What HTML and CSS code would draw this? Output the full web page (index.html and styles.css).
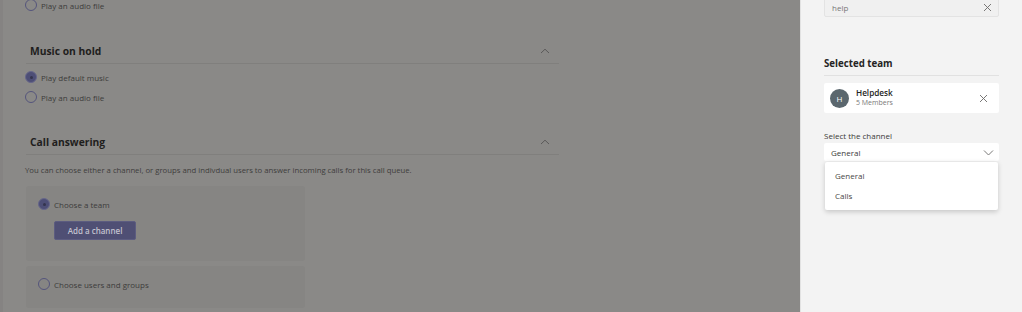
FILE: index.html
```html
<!DOCTYPE html>
<html lang="en">
<head>
<meta charset="utf-8">
<title>Call queue - Call answering</title>
<link rel="stylesheet" href="styles.css">
</head>
<body>
<div class="app">
  <main class="page">
    <div class="rail"></div>
    <div class="content">
      <div class="radio-row first"><span class="radio"></span><span>Play an audio file</span></div>

      <section class="section">
        <div class="section-head">
          <h2>Music on hold</h2>
          <svg class="chev" width="10" height="6" viewBox="0 0 10 6"><path d="M1 5 L5 1.2 L9 5" fill="none" stroke="#555453" stroke-width="0.9"/></svg>
        </div>
        <div class="radio-row"><span class="radio checked"></span><span>Play default music</span></div>
        <div class="radio-row"><span class="radio"></span><span>Play an audio file</span></div>
      </section>

      <section class="section answering">
        <div class="section-head">
          <h2>Call answering</h2>
          <svg class="chev" width="10" height="6" viewBox="0 0 10 6"><path d="M1 5 L5 1.2 L9 5" fill="none" stroke="#555453" stroke-width="0.9"/></svg>
        </div>
        <p class="desc">You can choose either a channel, or groups and indivdual users to answer incoming calls for this call queue.</p>
        <div class="option-card tall">
          <div class="radio-row"><span class="radio checked"></span><span>Choose a team</span></div>
          <button class="primary">Add a channel</button>
        </div>
        <div class="option-card">
          <div class="radio-row"><span class="radio"></span><span>Choose users and groups</span></div>
        </div>
      </section>
    </div>
  </main>

  <aside class="panel">
    <div class="search">
      <span>help</span>
      <svg width="9" height="9" viewBox="0 0 9 9"><path d="M1 1 L8 8 M8 1 L1 8" stroke="#6b6a69" stroke-width="0.9" fill="none"/></svg>
    </div>

    <h3 class="panel-title">Selected team</h3>

    <div class="team-card">
      <div class="avatar">H</div>
      <div class="team-info">
        <div class="team-name">Helpdesk</div>
        <div class="team-meta">5 Members</div>
      </div>
      <svg class="remove" width="9" height="9" viewBox="0 0 9 9"><path d="M1 1 L8 8 M8 1 L1 8" stroke="#6b6a69" stroke-width="0.9" fill="none"/></svg>
    </div>

    <label class="field-label">Select the channel</label>
    <div class="dropdown-wrap">
      <div class="select">
        <span>General</span>
        <svg width="11" height="7" viewBox="0 0 11 7"><path d="M1 1.5 L5.5 6 L10 1.5" fill="none" stroke="#7a7978" stroke-width="1"/></svg>
      </div>
      <ul class="menu">
        <li>General</li>
        <li>Calls</li>
      </ul>
    </div>
  </aside>
</div>
</body>
</html>
```

FILE: styles.css
```css
* { box-sizing: border-box; }
html, body { margin: 0; padding: 0; }
body {
  width: 1022px;
  height: 312px;
  overflow: hidden;
  font-family: "Open Sans", "Noto Sans", sans-serif;
  background: #8a8886;
}
.app {
  display: flex;
  height: 312px;
}
.page {
  flex: 0 0 800px;
  display: flex;
  background: #8a8987;
  color: #3e3d3c;
}
.rail {
  flex: 0 0 3px;
  background: #858382;
}
.content {
  flex: 1;
  padding-left: 22px;
  margin-top: -5px;
}
.radio-row {
  display: flex;
  align-items: center;
  gap: 4px;
  height: 20px;
  font-size: 8px;
  color: #3d3c3b;
}
.radio {
  width: 12px;
  height: 12px;
  border-radius: 50%;
  border: 1px solid #55557c;
  flex: 0 0 12px;
  position: relative;
}
.radio.checked {
  background: #4d4e76;
  border-color: #66668a;
}
.radio.checked::after {
  content: "";
  position: absolute;
  left: 3.5px; top: 3.5px;
  width: 3px; height: 3px;
  border-radius: 50%;
  background: #34344e;
}
.section { width: 533px; margin-left: 1px; }
.section-head {
  display: flex;
  align-items: center;
  justify-content: space-between;
  height: 23px;
  margin-top: 26px;
  border-bottom: 1px solid #807f7d;
  padding: 0 9px 2px 4px;
  margin-bottom: 3px;
}
.section-head h2 {
  margin: 0;
  font-size: 10.3px;
  font-weight: 700;
  color: #1f1e1d;
}
.section .radio-row { margin-left: -1px; }
.answering .section-head { margin-top: 25px; }
.desc {
  margin: 10px 0 0 -1px;
  font-size: 7.74px;
  color: #3e3d3c;
  white-space: nowrap;
}
.option-card {
  width: 279px;
  margin: 11px 0 0 0;
  background: #868583;
  border-radius: 3px;
  padding: 8px 12px;
  height: 42px;
}
.option-card.tall { height: 75px; }
.option-card + .option-card { margin-top: 5px; }
.option-card .radio-row { margin-left: 0; }
.primary {
  display: block;
  margin: 7px 0 0 16px;
  width: 82px;
  height: 19px;
  border: 1px solid #5c5c80;
  border-radius: 2px;
  background: #4f4f74;
  color: #c2c2cf;
  font-family: inherit;
  font-size: 8px;
  font-weight: 600;
  padding: 0;
}

.panel {
  flex: 1;
  background: #f3f3f3;
  border-left: 1px solid #e2e2e2;
  padding: 0 23px 0 23px;
  color: #252423;
}
.search {
  margin-top: -2px;
  height: 19px;
  background: #f0f0f0;
  border: 1px solid #e3e3e3;
  border-radius: 2px;
  display: flex;
  align-items: center;
  justify-content: space-between;
  padding: 0 6px 0 7px;
  font-size: 8px;
  color: #777;
}
.panel-title {
  margin: 39px 0 0 0;
  font-size: 9.7px;
  font-weight: 700;
  height: 20px;
  padding-top: 1px;
  border-bottom: 1px solid #e1e1e1;
  color: #252423;
}
.team-card {
  margin-top: 7px;
  height: 30px;
  background: #fff;
  border-radius: 2px;
  display: flex;
  align-items: center;
  padding: 0 11px 0 6px;
}
.avatar {
  width: 19px;
  height: 19px;
  border-radius: 50%;
  background: #5b676e;
  color: #fff;
  font-size: 8px;
  display: flex;
  align-items: center;
  justify-content: center;
}
.team-info { flex: 1; margin-left: 7px; line-height: 10px; margin-top: -1px; }
.team-name { font-size: 8.2px; font-weight: 600; color: #252423; }
.team-meta { font-size: 7px; color: #7a7978; }
.field-label {
  display: block;
  margin-top: 17px;
  font-size: 8px;
  color: #3b3a39;
  height: 13px;
}
.dropdown-wrap { position: relative; }
.select {
  height: 18px;
  background: #fff;
  border-radius: 2px;
  display: flex;
  align-items: center;
  justify-content: space-between;
  padding: 0 5px 0 7px;
  font-size: 8px;
  color: #3b3a39;
}
.menu {
  position: absolute;
  left: 1px; right: 1px; top: 19px;
  margin: 0;
  padding: 4px 0;
  list-style: none;
  background: #fff;
  border-radius: 2px;
  box-shadow: 0 1.5px 5px rgba(0,0,0,0.18);
  font-size: 8px;
  color: #484644;
}
.menu li {
  height: 20px;
  line-height: 20px;
  padding-left: 10px;
}
```
